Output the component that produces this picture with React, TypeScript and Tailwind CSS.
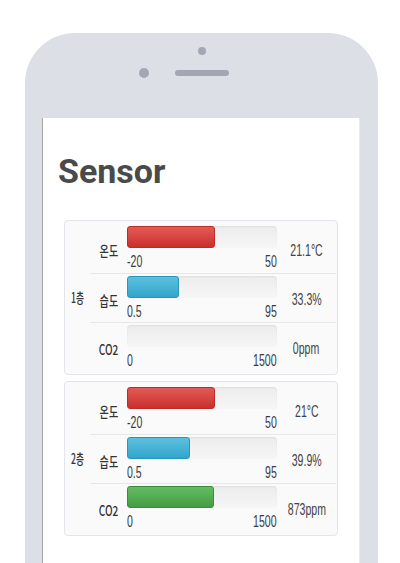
import React from "react";

type Reading = {
	label: string;
	min: number;
	max: number;
	value: number;
	text: string;
	tone: "danger" | "info" | "success";
};

type Floor = { name: string; readings: Reading[] };

const floors: Floor[] = [
	{
		name: "1층",
		readings: [
			{ label: "온도", min: -20, max: 50, value: 21.1, text: "21.1°C", tone: "danger" },
			{ label: "습도", min: 0.5, max: 95, value: 33.3, text: "33.3%", tone: "info" },
			{ label: "CO2", min: 0, max: 1500, value: 0, text: "0ppm", tone: "success" },
		],
	},
	{
		name: "2층",
		readings: [
			{ label: "온도", min: -20, max: 50, value: 21, text: "21°C", tone: "danger" },
			{ label: "습도", min: 0.5, max: 95, value: 39.9, text: "39.9%", tone: "info" },
			{ label: "CO2", min: 0, max: 1500, value: 873, text: "873ppm", tone: "success" },
		],
	},
];

const toneClass = {
	danger: "bg-gradient-to-b from-[#e35955] to-[#c9302c] border-[#b92c28]",
	info: "bg-gradient-to-b from-[#5bc0de] to-[#31a5cc] border-[#2a95b8]",
	success: "bg-gradient-to-b from-[#62bd62] to-[#449d44] border-[#3d8b3d]",
};

// the screenshot's font is a squeezed condensed face, so narrow it with scale-x
const num = "inline-block scale-x-[0.66] font-['Liberation_Sans',sans-serif] text-[16px]";
const kor = "inline-block scale-x-[0.72] font-['Noto_Sans_CJK_KR',sans-serif] text-[14px] font-medium";

const SensorRow: React.FC<{ r: Reading; first: boolean }> = ({ r, first }) => {
	const pct = Math.max(0, Math.min(100, ((r.value - r.min) / (r.max - r.min)) * 100));
	return (
		<div className={`flex h-[49px] ${first ? "" : "border-t border-[#e6e7ea]"}`}>
			<div className="w-[37px] flex items-center justify-center pt-[4px] text-[#333]">
				<span className={kor}>{r.label}</span>
			</div>
			<div className="w-[150px] pt-[2px]">
				<div className="h-[22px] rounded-[4px] bg-gradient-to-b from-[#ececec] to-[#f6f6f6] shadow-[inset_0_1px_2px_rgba(0,0,0,0.06)]">
					{pct > 0 && (
						<div
							className={`h-full rounded-[3px] border ${toneClass[r.tone]}`}
							style={{ width: `${pct}%` }}
						/>
					)}
				</div>
				<div className="mt-[3px] flex justify-between leading-[22px] text-[#3a3a3a]">
					<span className={`${num} origin-left`}>{r.min}</span>
					<span className={`${num} origin-right`}>{r.max}</span>
				</div>
			</div>
			<div className="flex-1 flex items-center justify-center pt-[4px] text-[#444]">
				<span className={num}>{r.text}</span>
			</div>
		</div>
	);
};

const FloorCard: React.FC<{ floor: Floor }> = ({ floor }) => (
	<div className="flex rounded-[4px] border border-[#e3e5ea] bg-[#fafafa] py-[3px]">
		<div className="w-[25px] flex items-center justify-center text-[#333]">
			<span className="inline-block scale-x-[0.62] font-['Noto_Sans_CJK_KR',sans-serif] text-[14px] font-medium">
				{floor.name}
			</span>
		</div>
		<div className="flex-1 pr-[1px]">
			{floor.readings.map((r, i) => (
				<SensorRow key={r.label} r={r} first={i === 0} />
			))}
		</div>
	</div>
);

export default function App() {
	return (
		<div className="w-[400px] h-[563px] overflow-hidden bg-white pt-[33px] pl-[25px]">
			<div className="w-[353px] h-[530px] rounded-t-[50px] bg-[#dcdfe6] flex flex-col items-center pt-[14px]">
				<div className="h-2 w-2 rounded-full bg-[#a3a6b4]" />
				<div className="mt-[13px] w-full grid grid-cols-[1fr_auto_1fr] items-center">
					<div className="justify-self-end mr-[26px] h-[10px] w-[10px] rounded-full bg-[#a3a6b4]" />
					<div className="h-[6px] w-[54px] rounded-full bg-[#a3a6b4]" />
					<div />
				</div>
				<div className="mt-[40px] self-start ml-[17px] w-[318px] flex-1 bg-white border-l border-l-[#a5a5a5] border-r border-r-[#ececec] pt-[33px] px-[15px]">
					<h1 className="text-[34px] leading-[40px] font-bold text-[#4a4a4a] font-['Roboto',sans-serif]">
						Sensor
					</h1>
					<div className="mt-[29px] px-[6px] flex flex-col gap-[6px]">
						{floors.map((f) => (
							<FloorCard key={f.name} floor={f} />
						))}
					</div>
				</div>
			</div>
		</div>
	);
}
